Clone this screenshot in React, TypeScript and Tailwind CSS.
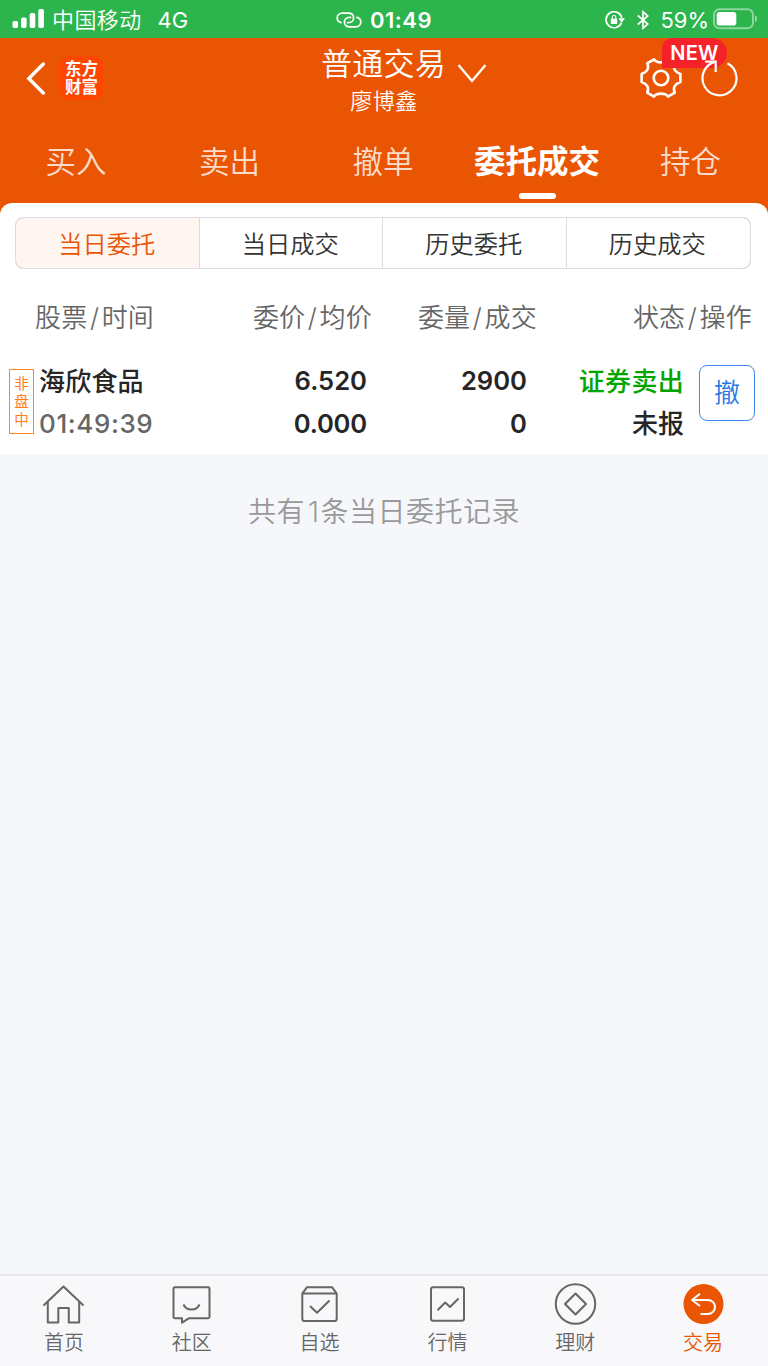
import React from "react";

const tabs = [
  { label: "买入", width: "w-[152px]" },
  { label: "卖出", width: "w-[155px]" },
  { label: "撤单", width: "w-[152px]" },
  { label: "委托成交", width: "w-[156px]", active: true },
  { label: "持仓", width: "w-[151px]" },
];

const segments = ["当日委托", "当日成交", "历史委托", "历史成交"];

function StatusBar() {
  return (
    <div className="grid h-[38px] grid-cols-3 items-center bg-[#2db54d] text-white">
      <div className="flex items-center pl-3">
        <svg width="32" height="20" viewBox="0 0 32 20" fill="currentColor">
          <rect x="0.5" y="12" width="5.6" height="7" rx="1.8" />
          <rect x="9" y="8.5" width="5.6" height="10.5" rx="1.8" />
          <rect x="17.7" y="4" width="5.6" height="15" rx="1.8" />
          <rect x="26.3" y="0" width="5.6" height="19" rx="1.8" />
        </svg>
        <span className="relative top-px ml-2 text-[22px] leading-[38px] font-[350] tracking-[0.4px]">中国移动</span>
        <span className="relative top-px ml-4 text-[22px] leading-[38px]">4G</span>
      </div>
      <div className="flex items-center justify-center gap-2">
        <svg className="relative top-px" width="26" height="16" viewBox="0 0 26 16" fill="none" stroke="currentColor" strokeWidth="1.7" strokeLinecap="round">
          <path d="M5 10.6C2.6 10 1.2 8.3 1.2 6.1C1.2 3.2 3.3 1.2 6.3 1.2H12.4C15.5 1.2 17.6 3.1 17.6 5.9C17.6 8.6 15.6 10.6 12.8 10.6H11.6" />
          <path d="M21 5.4C23.4 6 24.8 7.7 24.8 9.9C24.8 12.8 22.7 14.8 19.7 14.8H13.6C10.5 14.8 8.4 12.9 8.4 10.1C8.4 7.4 10.4 5.4 13.2 5.4H14.4" />
        </svg>
        <span className="relative top-px text-[22px] leading-[38px] font-semibold tracking-[0.5px]">01:49</span>
      </div>
      <div className="flex items-center justify-end pr-[10px]">
        <svg className="relative top-px" width="20" height="18" viewBox="0 0 20 18" fill="none" stroke="currentColor" strokeWidth="1.7">
          <path d="M16.5 11.6A8 8 0 1 1 16.8 6.8" />
          <path d="M13.5 7.3H20L16.7 11.8Z" fill="currentColor" stroke="none" />
          <rect x="5.8" y="7.8" width="6.4" height="5.2" rx="0.7" fill="currentColor" stroke="none" />
          <path d="M7.2 8V6.3A1.8 1.8 0 0 1 10.8 6.3V8" strokeWidth="1.2" />
        </svg>
        <svg className="relative top-px ml-3 mr-[11px]" width="12" height="20" viewBox="0 0 12 20" fill="none" stroke="currentColor" strokeWidth="1.7">
          <path d="M0.8 5.5L10.8 14L6 18.2V1.8L10.8 6L0.8 14.5" />
        </svg>
        <span className="relative top-px text-[22px] leading-[38px]">59%</span>
        <svg className="ml-[4px]" width="45" height="22" viewBox="0 0 45 22" fill="none">
          <rect x="1" y="1.2" width="39" height="19" rx="5.5" stroke="white" strokeOpacity="0.45" strokeWidth="2" />
          <rect x="3.7" y="4" width="19.6" height="13.6" rx="2.8" fill="white" />
          <path d="M42 7.3C44.7 8.4 44.7 13 42 14.1Z" fill="white" fillOpacity="0.5" />
        </svg>
      </div>
    </div>
  );
}

function Header() {
  return (
    <div className="relative flex h-[84px] justify-between">
      <div className="flex w-[256px] items-start pl-[26px] pt-[18px]">
        <svg className="mt-[6px]" width="20" height="33" viewBox="0 0 20 33" fill="none" stroke="white" strokeWidth="3.4" strokeLinecap="round">
          <path d="M17.3 2L2.8 16.5L17.3 31" />
        </svg>
        <div className="ml-[14px] flex h-[44px] w-[43px] flex-col items-center rounded-[9px] bg-[#ff4502] pt-[4px] text-[16.5px] leading-[18px] font-bold text-white">
          <span>东方</span>
          <span>财富</span>
        </div>
      </div>
      <div className="flex flex-col items-center text-white">
        <div className="flex h-[50px] items-center pl-[40px]">
          <span className="pt-[2px] text-[31px] leading-[50px] font-[350] tracking-[0.3px]">普通交易</span>
          <svg className="ml-[11px] mt-[21px]" width="30" height="22" viewBox="0 0 30 22" fill="none" stroke="currentColor" strokeWidth="2.3">
            <path d="M1.5 2L15 18L28.5 2" />
          </svg>
        </div>
        <span className="text-[22px] leading-[26px] font-[350] tracking-[0.5px]">廖博鑫</span>
      </div>
      <div className="flex w-[256px] items-start justify-end gap-[19px] pr-[29px] pt-[19px] text-white">
        <svg width="42" height="42" viewBox="0 0 42 42" fill="none" stroke="currentColor" strokeWidth="2.6" strokeLinejoin="round">
          <path d="M14 2.4C16.5 6.4 25.5 6.4 28 2.4L34.8 6.3C32.4 11.5 35 15.2 40.4 17V25C35 26.8 32.4 30.5 34.8 35.7L28 39.6C25.5 35.6 16.5 35.6 14 39.6L7.2 35.7C9.6 30.5 7 26.8 1.6 25V17C7 15.2 9.6 11.5 7.2 6.3Z" />
          <circle cx="21" cy="21" r="7.3" />
        </svg>
        <svg className="relative z-10" width="38" height="42" viewBox="0 0 38 42" fill="none" stroke="currentColor" strokeWidth="2.2">
          <path d="M26.5 6.3A17 17 0 1 1 14 4.9" />
          <path d="M4 4.6H14.7V15" />
        </svg>
      </div>
      <span className="absolute left-[662px] top-0 h-[30px] w-[65px] rounded-[15px] rounded-tl-[10px] rounded-bl-none bg-[#f5222a] text-center text-[20px] leading-[30px] font-semibold tracking-[0.3px] text-white">NEW</span>
    </div>
  );
}

function Tabs() {
  return (
    <div className="flex h-[81px]">
      {tabs.map((tab) => (
        <div key={tab.label} className={"flex flex-col items-center " + tab.width}>
          <span className={tab.active ? "h-[71px] text-[31.5px] leading-[80px] font-bold whitespace-nowrap text-white" : "h-[71px] text-[30.5px] leading-[80px] font-[350] whitespace-nowrap text-[#fbdccb]"}>
            {tab.label}
          </span>
          {tab.active && <i className="h-[6px] w-[37px] rounded-[3px] bg-white" />}
        </div>
      ))}
    </div>
  );
}

function Segments() {
  return (
    <div className="relative mx-[15px] mb-px grid h-[52px] w-[736px] grid-cols-4 overflow-hidden rounded-[8px] border border-[#dcdde3]">
      {segments.map((label, index) => (
        <div key={label} className={"pr-[2px] text-center text-[24.3px] leading-[52px] font-[350] " + (index === 0 ? "bg-[#fff5f1] text-[#ea5503]" : "-ml-px border-l border-[#dcdde3] text-[#333]")}>
          {label}
        </div>
      ))}
      <svg className="absolute -left-px -top-px" width="736" height="52" viewBox="0 0 736 52" fill="none" stroke="#eb8f66" strokeWidth="1">
        <path d="M18 0.5H8.5A8 8 0 0 0 0.5 8.5M0.5 43.5A8 8 0 0 0 8.5 51.5H18" />
        <path d="M727.5 0.5A8 8 0 0 1 735.5 8.5M735.5 43.5A8 8 0 0 1 727.5 51.5" />
      </svg>
    </div>
  );
}

function ColumnTitle({ first, second, className }: { first: string; second: string; className: string }) {
  return (
    <span className={className}>
      {first}
      <span className="mx-[2.5px]">/</span>
      {second}
    </span>
  );
}

function OrderTable() {
  return (
    <>
      <div className="flex h-[95px] text-[26px] leading-[95px] font-[350] tracking-[0.2px] text-[#666]">
        <ColumnTitle first="股票" second="时间" className="w-[172px] pl-[35px]" />
        <ColumnTitle first="委价" second="均价" className="w-[200px] text-right" />
        <ColumnTitle first="委量" second="成交" className="w-[165px] text-right" />
        <ColumnTitle first="状态" second="操作" className="w-[215px] text-right" />
      </div>
      <div className="flex h-[89px] text-[26px] leading-[43px] font-semibold text-[#262626]">
        <div className="mt-[4px] ml-[9px] flex h-[65px] w-[25px] flex-col items-center border border-[#ff8a24] pt-[5px] text-[14.5px] leading-[18px] font-normal text-[#ff7d12]">
          <span>非</span><span>盘</span><span>中</span>
        </div>
        <div className="-mt-[5px] ml-[5px] flex w-[133px] flex-col">
          <span className="font-medium tracking-[0.2px]">海欣食品</span>
          <span className="-mt-px font-medium tracking-[0.6px] text-[#666]">01:49:39</span>
        </div>
        <div className="-mt-[6px] flex w-[195px] flex-col text-right text-[25.6px]">
          <span>6.520</span><span className="tracking-[-0.2px]">0.000</span>
        </div>
        <div className="-mt-[6px] flex w-[160px] flex-col text-right text-[25.6px]">
          <span>2900</span><span>0</span>
        </div>
        <div className="-mt-[5px] flex w-[157px] flex-col text-right">
          <span className="font-medium tracking-[0.3px] text-[#00a600]">证券卖出</span><span className="-mt-px font-medium">未报</span>
        </div>
        <button className="ml-[15px] h-[56px] w-[56px] rounded-[8px] border border-[#4389ee] text-[26px] leading-[54px] font-[350] text-[#2879e4]">撤</button>
      </div>
    </>
  );
}

const navItems = [
  {
    label: "首页",
    icon: (
      <>
        <path d="M1.5 20.5L21.5 1.5L41.5 20.5" />
        <path d="M5.8 17V37.5H16.3V23H26.8V37.5H37.2V17" />
      </>
    ),
  },
  {
    label: "社区",
    icon: (
      <>
        <path d="M5 2.3H38A1.5 1.5 0 0 1 39.5 3.8V31.8A1.5 1.5 0 0 1 38 33.3H18.8L12 37.7V33.3H5A1.5 1.5 0 0 1 3.5 31.8V3.8A1.5 1.5 0 0 1 5 2.3Z" />
        <path d="M13.5 19.5C16.5 26.3 26.5 26.3 29.5 19.5" />
      </>
    ),
  },
  {
    label: "自选",
    icon: (
      <>
        <path d="M4.3 8.6L8.8 2.3H34.2L38.7 8.6V34A2 2 0 0 1 36.7 36H6.3A2 2 0 0 1 4.3 34Z" />
        <path d="M4.3 8.6H38.7M12 21L19 27.7L31.5 15.5" />
      </>
    ),
  },
  {
    label: "行情",
    icon: (
      <>
        <rect x="5" y="2.3" width="33" height="33.5" rx="2" />
        <path d="M11.5 25.3L19.2 17.5L24 22L32.5 13.5" />
      </>
    ),
  },
  {
    label: "理财",
    icon: (
      <>
        <circle cx="21.5" cy="19" r="19.7" />
        <path d="M21.5 8.5L32 19L21.5 29.5L11 19Z" />
      </>
    ),
  },
  {
    label: "交易",
    icon: (
      <>
        <circle cx="21.5" cy="19" r="20" fill="#ea5503" stroke="none" />
        <g stroke="white">
          <path d="M18 8.7L10 15L18 21" />
          <path d="M10.5 15H25.5C35.5 15 35.5 29 25.5 29H18.5" />
        </g>
      </>
    ),
  },
];

function BottomNav() {
  return (
    <nav className="grid h-[92px] grid-cols-6 border-t-2 border-[#e6e8eb] bg-[#f8f8fa] pr-px">
      {navItems.map((item) => (
        <div key={item.label} className={"flex flex-col items-center pt-[9px] " + (item.label === "交易" ? "text-[#ea5503]" : "text-[#666]")}>
          <svg className="overflow-visible" width="43" height="40" viewBox="0 0 43 40" fill="none" stroke="currentColor" strokeWidth="2" strokeLinejoin="round">
            {item.icon}
          </svg>
          <span className="mt-[3px] text-[20px] leading-[30px] font-[350]">{item.label}</span>
        </div>
      ))}
    </nav>
  );
}

export default function App() {
  return (
    <div className="flex h-[1366px] w-[768px] flex-col overflow-hidden bg-[#f6f7fa] font-['Inter','Noto_Sans_CJK_SC',sans-serif]">
      <StatusBar />
      <div className="bg-[#ea5503]">
        <Header />
        <Tabs />
        <main className="h-[251px] rounded-t-[12px] bg-white pt-[14px]">
          <Segments />
          <OrderTable />
        </main>
      </div>
      <p className="flex-1 pt-[35px] text-center text-[28px] leading-[46px] font-[350] tracking-[0.5px] text-[#999]">
        共有<span className="ml-[3px] mr-[1px]">1</span>条当日委托记录
      </p>
      <BottomNav />
    </div>
  );
}
